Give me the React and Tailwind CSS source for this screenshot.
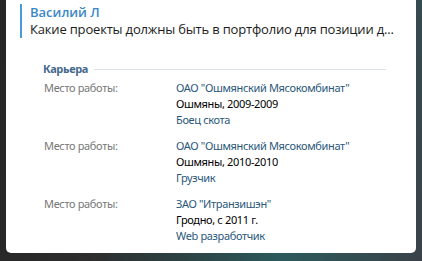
const JOBS = [
  { company: 'ОАО "Ошмянский Мясокомбинат"', place: "Ошмяны, 2009-2009", role: "Боец скота" },
  { company: 'ОАО "Ошмянский Мясокомбинат"', place: "Ошмяны, 2010-2010", role: "Грузчик" },
  { company: 'ЗАО "Итранзишэн"', place: "Гродно, с 2011 г.", role: "Web разработчик" },
];

export default function App() {
  return (
    <div className="h-[261px] w-[422px] overflow-hidden bg-[linear-gradient(100deg,#252525_0%,#2e2e2e_30%,#2c5a5c_70%,#3a4248_100%)] px-[6px] pb-[8px]">
      <div className="h-full rounded-b-[5px] bg-white">
        <div className="pl-[14px] pt-[4px]">
          <div className="border-l-[2px] border-[#4a9ad8] pl-[8px] font-['Open_Sans',sans-serif] leading-[17px]">
            <p className="text-[13px] font-semibold text-[#3b87c8]">Василий Л</p>
            <p className="text-[13px] tracking-[-0.18px] text-[#1c1c1c]">
              Какие проекты должны быть в портфолио для позиции д...
            </p>
          </div>
        </div>

        <div className="pl-[37px] pr-[30px] pt-[23px] font-['Noto_Sans',sans-serif] text-[11px] tracking-[-0.35px]">
          <div className="flex items-center gap-[6px]">
            <span className="font-bold text-[#45688e]">Карьера</span>
            <div className="h-px flex-1 bg-[#dae1e8]" />
          </div>

          <div className="mt-[2px] flex flex-col gap-[10px] pl-[1px]">
            {JOBS.map((job, i) => (
              <div key={i} className="flex leading-[16px]">
                <div className="w-[132px] text-[#777777]">Место работы:</div>
                <div>
                  <div className="text-[#2b587a]">{job.company}</div>
                  <div className="text-black">{job.place}</div>
                  <div className="text-[#2b587a]">{job.role}</div>
                </div>
              </div>
            ))}
          </div>
        </div>
      </div>
    </div>
  );
}
